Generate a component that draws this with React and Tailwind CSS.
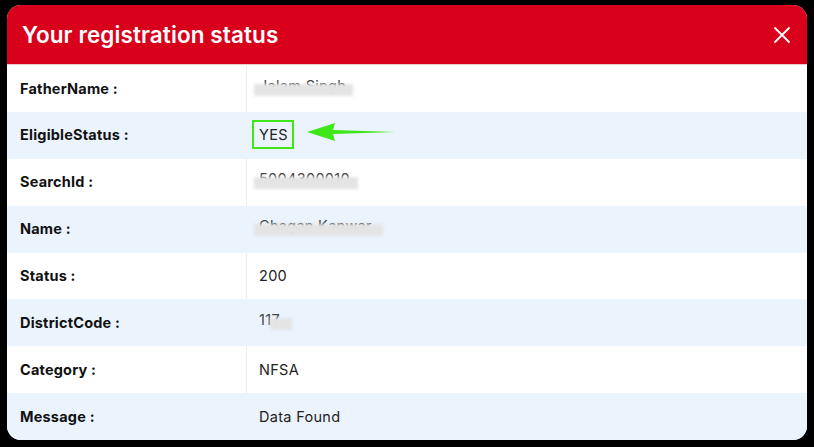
import React from "react";

const rows = [
  { label: "FatherName :", value: "Jalam Singh", blur: true },
  { label: "EligibleStatus :", value: "YES", boxed: true },
  { label: "SearchId :", value: "5004300010", blur: true },
  { label: "Name :", value: "Chagan Kanwar", blur: true },
  { label: "Status :", value: "200" },
  { label: "DistrictCode :", value: "117", blur: true, short: true },
  { label: "Category :", value: "NFSA" },
  { label: "Message :", value: "Data Found" },
];

export default function App() {
  return (
    <div
      className="w-[814px] h-[447px] bg-black pt-[5px] pl-[7px]"
      style={{ fontFamily: "Inter, 'Noto Sans', sans-serif" }}
    >
      <div className="w-[800px] h-[435px] rounded-[14px] overflow-hidden bg-white flex flex-col">
        <div className="h-[60px] bg-[#d9001b] flex items-center justify-between pl-[15px] pr-[16px] border-b border-[#f4c9cd]">
          <span className="text-white text-[22.5px] font-semibold tracking-[0.1px]">
            Your registration status
          </span>
          <svg width="18" height="18" viewBox="0 0 18 18" fill="none" stroke="white" strokeWidth="1.8" strokeLinecap="round">
            <path d="M2 2 L16 16 M16 2 L2 16" />
          </svg>
        </div>
        <div className="flex-1 flex flex-col">
          {rows.map((r, i) => (
            <div
              key={i}
              className={`flex-1 flex items-center ${i % 2 === 1 ? "bg-[#ebf3fd]" : "bg-white"}`}
            >
              <div className="w-[239px] h-full flex items-center pl-[13px] text-[14.5px] font-bold text-[#111] tracking-[0.2px]">
                {r.label}
              </div>
              <div className={`flex-1 h-full flex items-center pl-[12px] text-[14.5px] text-[#222] tracking-[0.3px] border-l ${i % 2 === 1 ? "border-[#ebf3fd]" : "border-[#ececec]"}`}>
                {r.boxed ? (
                  <span className="relative">
                    <span className="-ml-[7px] border-2 border-[#3ee61a] pl-[5px] pr-[4px] py-[4px]">{r.value}</span>
                    <svg className="absolute left-[46px] top-[-4px]" width="92" height="26" viewBox="0 0 92 26">
                      <path d="M90 12 L28 10 L30 3 L2 12 L30 21 L28 14 Z" fill="#3ee61a" />
                    </svg>
                  </span>
                ) : r.blur ? (
                  <span className="relative inline-block text-[#444]">
                    <span className="relative -top-[3px]">{r.value}</span>
                    <span
                      className={`absolute top-[6px] h-[12px] bg-[#e4e4e4] blur-[1.5px] ${r.short ? "left-[11px] w-[22px]" : "left-[-5px] w-[114%]"}`}
                    ></span>
                  </span>
                ) : (
                  r.value
                )}
              </div>
            </div>
          ))}
        </div>
      </div>
    </div>
  );
}
